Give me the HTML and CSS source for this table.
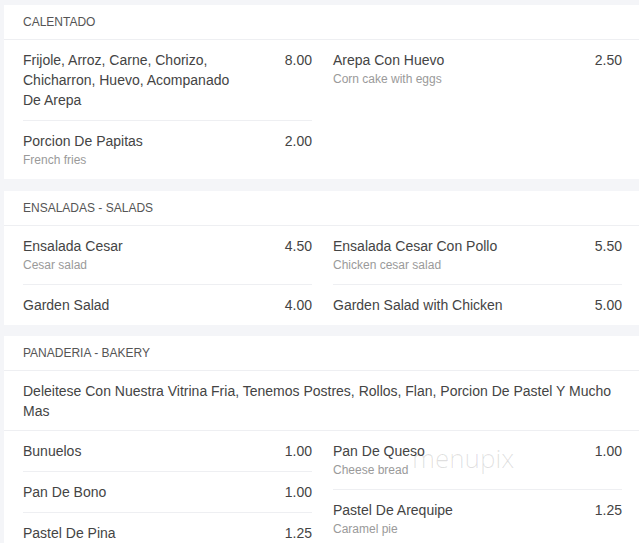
FILE: index.html
```html
<!DOCTYPE html>
<html lang="en">
<head>
  <meta charset="UTF-8" />
  <meta name="viewport" content="width=device-width, initial-scale=1.0" />
  <title>Menu</title>
  <link rel="stylesheet" href="styles.css">
</head>
<body>
  <div class="menu">

    <div class="section">
      <div class="section-title">Calentado</div>
      <div class="items">
        <div class="col">
          <div class="item">
            <div class="info">
              <div class="name">Frijole, Arroz, Carne, Chorizo, Chicharron, Huevo, Acompanado De Arepa</div>
            </div>
            <div class="price">8.00</div>
          </div>
          <div class="item">
            <div class="info">
              <div class="name">Porcion De Papitas</div>
              <div class="desc">French fries</div>
            </div>
            <div class="price">2.00</div>
          </div>
        </div>
        <div class="col">
          <div class="item">
            <div class="info">
              <div class="name">Arepa Con Huevo</div>
              <div class="desc">Corn cake with eggs</div>
            </div>
            <div class="price">2.50</div>
          </div>
        </div>
      </div>
    </div>

    <div class="section">
      <div class="section-title">Ensaladas - Salads</div>
      <div class="items">
        <div class="col">
          <div class="item">
            <div class="info">
              <div class="name">Ensalada Cesar</div>
              <div class="desc">Cesar salad</div>
            </div>
            <div class="price">4.50</div>
          </div>
          <div class="item">
            <div class="info">
              <div class="name">Garden Salad</div>
            </div>
            <div class="price">4.00</div>
          </div>
        </div>
        <div class="col">
          <div class="item">
            <div class="info">
              <div class="name">Ensalada Cesar Con Pollo</div>
              <div class="desc">Chicken cesar salad</div>
            </div>
            <div class="price">5.50</div>
          </div>
          <div class="item">
            <div class="info">
              <div class="name">Garden Salad with Chicken</div>
            </div>
            <div class="price">5.00</div>
          </div>
        </div>
      </div>
    </div>

    <div class="section">
      <div class="section-title">Panaderia - Bakery</div>
      <div class="section-desc">Deleitese Con Nuestra Vitrina Fria, Tenemos Postres, Rollos, Flan, Porcion De Pastel Y Mucho Mas</div>
      <div class="items">
        <div class="col">
          <div class="item">
            <div class="info">
              <div class="name">Bunuelos</div>
            </div>
            <div class="price">1.00</div>
          </div>
          <div class="item">
            <div class="info">
              <div class="name">Pan De Bono</div>
            </div>
            <div class="price">1.00</div>
          </div>
          <div class="item">
            <div class="info">
              <div class="name">Pastel De Pina</div>
            </div>
            <div class="price">1.25</div>
          </div>
        </div>
        <div class="col">
          <div class="item">
            <div class="info">
              <div class="name">Pan De Queso</div>
              <div class="desc">Cheese bread</div>
            </div>
            <div class="price">1.00</div>
          </div>
          <div class="item">
            <div class="info">
              <div class="name">Pastel De Arequipe</div>
              <div class="desc">Caramel pie</div>
            </div>
            <div class="price">1.25</div>
          </div>
        </div>
      </div>
      <div class="watermark">menupix</div>
    </div>

  </div>
</body>
</html>
```

FILE: styles.css
```css
* {
  box-sizing: border-box;
  margin: 0;
  padding: 0;
}

body {
  background: #f4f5f8;
  font-family: "Liberation Sans", Arial, sans-serif;
  color: #444;
}

.menu {
  padding: 5px 0 0 4px;
}

.section {
  position: relative;
  background: #fff;
  margin-bottom: 12px;
}

.section + .section + .section {
  margin-top: -1px;
}

.section-title {
  font-size: 12px;
  line-height: 14px;
  text-transform: uppercase;
  color: #555;
  padding: 10px 19px;
  border-bottom: 1px solid #eeeff2;
}

.section-desc {
  font-size: 14px;
  line-height: 20px;
  padding: 10px 19px 9px;
  border-bottom: 1px solid #eeeff2;
}

.items {
  display: grid;
  grid-template-columns: 289px 289px;
  gap: 21px;
  padding: 0 17px 0 19px;
}

.item {
  display: flex;
  justify-content: space-between;
  align-items: flex-start;
  gap: 40px;
  padding: 10px 0;
  border-bottom: 1px solid #eeeff2;
}

.item:last-child {
  border-bottom: none;
}

.name {
  font-size: 14px;
  line-height: 20px;
  color: #444;
}

.desc {
  font-size: 12px;
  line-height: 18px;
  color: #9a9a9a;
}

.price {
  font-size: 14px;
  line-height: 20px;
  color: #444;
  white-space: nowrap;
}

.watermark {
  position: absolute;
  left: 408px;
  top: 104px;
  font-family: "Open Sans", sans-serif;
  font-weight: 300;
  font-size: 26px;
  color: rgba(0, 0, 0, 0.12);
  pointer-events: none;
}
```
